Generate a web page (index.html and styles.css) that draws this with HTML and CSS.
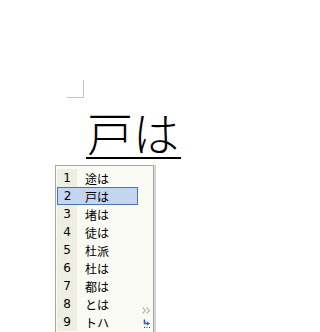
FILE: index.html
```html
<!DOCTYPE html>
<html lang="ja">
<head>
  <meta charset="UTF-8" />
  <title>IME Candidates</title>
  <link rel="stylesheet" href="styles.css">
</head>
<body>
  <div class="page">
    <div class="corner"></div>
    <div class="word">戸は</div>
  </div>

  <div class="cand">
    <div class="row"><span class="num">1</span><span class="txt">途は</span></div>
    <div class="row sel"><span class="num">2</span><span class="txt">戸は</span></div>
    <div class="row"><span class="num">3</span><span class="txt">堵は</span></div>
    <div class="row"><span class="num">4</span><span class="txt">徒は</span></div>
    <div class="row"><span class="num">5</span><span class="txt">杜派</span></div>
    <div class="row"><span class="num">6</span><span class="txt">杜は</span></div>
    <div class="row"><span class="num">7</span><span class="txt">都は</span></div>
    <div class="row"><span class="num">8</span><span class="txt">とは</span></div>
    <div class="row"><span class="num">9</span><span class="txt">トハ</span></div>

    <svg class="more" width="9" height="7" viewBox="0 0 9 7">
      <path d="M0.5 0.5 L3.5 3.5 L0.5 6.5 M4.5 0.5 L7.5 3.5 L4.5 6.5" fill="none" stroke="#b8b8b8" stroke-width="1.2"/>
    </svg>
    <svg class="back" width="8" height="10" viewBox="0 0 8 10">
      <path d="M1.5 0.5 L1.5 4.5 L5 4.5" fill="none" stroke="#2a5bd7" stroke-width="1.6"/>
      <path d="M4 2.5 L7 4.5 L4 6.5 Z" fill="#2a5bd7"/>
      <path d="M1 8.5 h1 M3.5 8.5 h1 M6 8.5 h1" stroke="#333" stroke-width="1"/>
    </svg>
  </div>
</body>
</html>
```

FILE: styles.css
```css
body {
  margin: 0;
  background: #fff;
  font-family: "Noto Sans CJK JP", sans-serif;
}
.page {
  padding: 80px 0 0 67px;
}
.corner {
  width: 16px;
  height: 17px;
  border-right: 1px solid #c4c4c4;
  border-bottom: 1px solid #c4c4c4;
}
.word {
  display: inline-block;
  margin: 8px 0 0 19px;
  font-size: 46px;
  font-weight: 300;
  line-height: 51px;
  color: #000;
  border-bottom: 2px solid #000;
  padding: 0 2px 0 1px;
}
.cand {
  position: absolute;
  left: 55px;
  top: 165px;
  width: 96px;
  height: 163px;
  padding: 3px 0 0 1px;
  overflow: hidden;
  background: #fbfbf6;
  border: 1px solid #a6a6a6;
  border-bottom: none;
  box-shadow: 2px 0 0 #d4d4d4;
}
.row {
  display: flex;
  align-items: center;
  width: 81px;
  height: 18px;
  font-size: 12px;
  color: #000;
}
.num {
  width: 20px;
  height: 100%;
  display: flex;
  align-items: center;
  justify-content: center;
  background: #efeee3;
  font-family: "DejaVu Sans", sans-serif;
  font-size: 12px;
}
.txt {
  margin-left: 8px;
}
.row.sel {
  box-sizing: border-box;
  background: #c4d5f0;
  border: 1px solid #4272cc;
}
.row.sel .num {
  background: transparent;
  width: 19px;
}
.more {
  position: absolute;
  left: 86px;
  top: 141px;
}
.back {
  position: absolute;
  left: 87px;
  top: 153px;
}
```
